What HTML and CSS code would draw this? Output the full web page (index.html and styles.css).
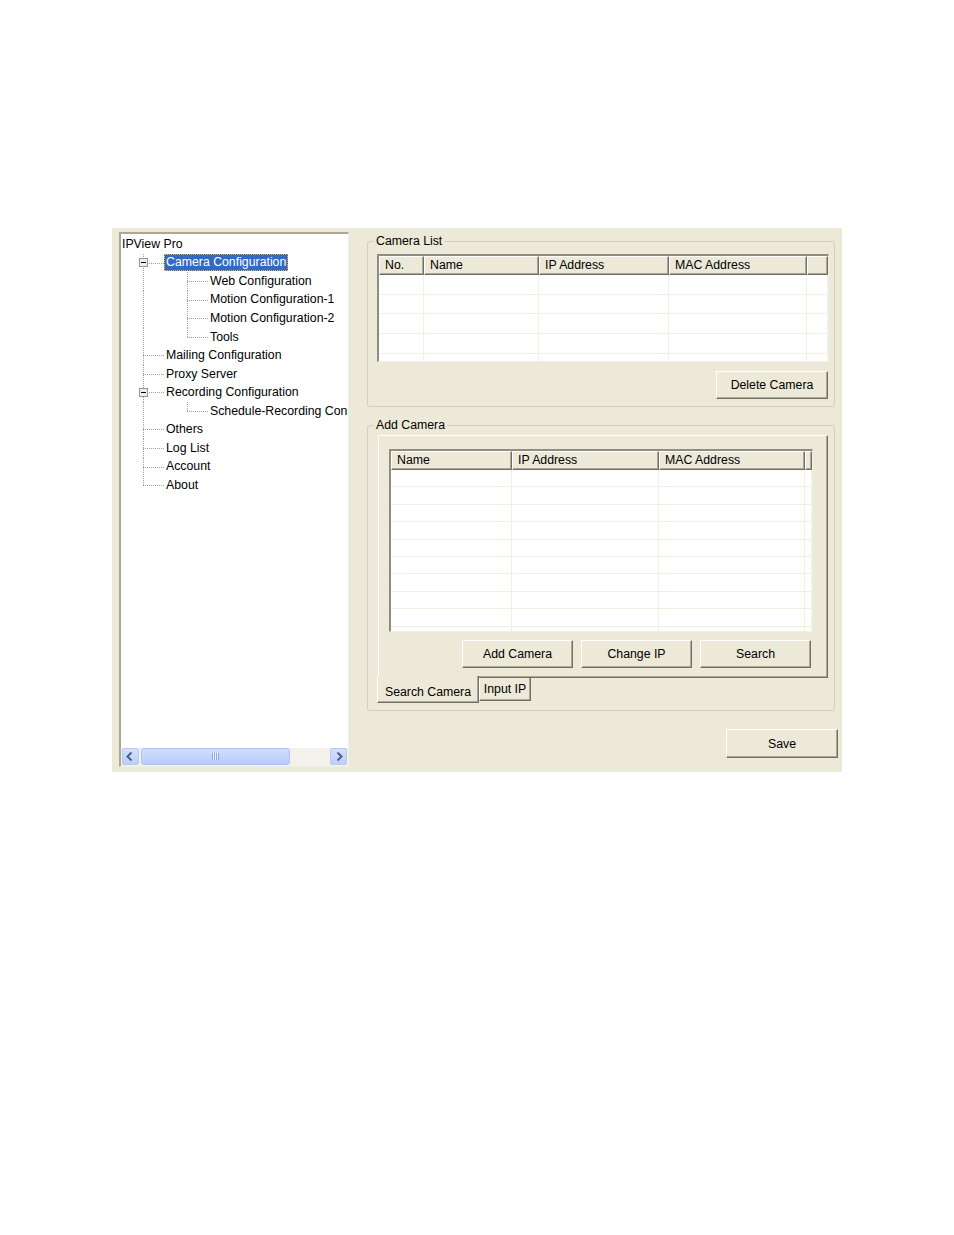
FILE: index.html
```html
<!DOCTYPE html>
<html>
<head>
<meta charset="utf-8">
<title>IPView Pro</title>
<link rel="stylesheet" href="styles.css">
</head>
<body>
<div class="page">
  <div class="window">
    <div class="treepanel">
      <div class="tree">
        <div class="row"><span class="label root">IPView Pro</span></div>
        <div class="row"><span class="sp"></span><span class="c tee"><svg class="exp" width="9" height="9" viewBox="0 0 9 9"><rect x="0.5" y="0.5" width="8" height="8" fill="#EEEDE6" stroke="#919B9C"/><path d="M2 4.5h5" stroke="#000"/></svg></span><span class="label sel">Camera Configuration</span></div>
        <div class="row"><span class="sp"></span><span class="c pipe"></span><span class="sp2"></span><span class="c tee"></span><span class="label">Web Configuration</span></div>
        <div class="row"><span class="sp"></span><span class="c pipe"></span><span class="sp2"></span><span class="c tee"></span><span class="label">Motion Configuration-1</span></div>
        <div class="row"><span class="sp"></span><span class="c pipe"></span><span class="sp2"></span><span class="c tee"></span><span class="label">Motion Configuration-2</span></div>
        <div class="row"><span class="sp"></span><span class="c pipe"></span><span class="sp2"></span><span class="c ell"></span><span class="label">Tools</span></div>
        <div class="row"><span class="sp"></span><span class="c tee"></span><span class="label">Mailing Configuration</span></div>
        <div class="row"><span class="sp"></span><span class="c tee"></span><span class="label">Proxy Server</span></div>
        <div class="row"><span class="sp"></span><span class="c tee"><svg class="exp" width="9" height="9" viewBox="0 0 9 9"><rect x="0.5" y="0.5" width="8" height="8" fill="#EEEDE6" stroke="#919B9C"/><path d="M2 4.5h5" stroke="#000"/></svg></span><span class="label">Recording Configuration</span></div>
        <div class="row"><span class="sp"></span><span class="c pipe"></span><span class="sp2"></span><span class="c ell"></span><span class="label">Schedule-Recording Con</span></div>
        <div class="row"><span class="sp"></span><span class="c tee"></span><span class="label">Others</span></div>
        <div class="row"><span class="sp"></span><span class="c tee"></span><span class="label">Log List</span></div>
        <div class="row"><span class="sp"></span><span class="c tee"></span><span class="label">Account</span></div>
        <div class="row"><span class="sp"></span><span class="c ell"></span><span class="label">About</span></div>
      </div>
      <div class="hscroll">
        <span class="sbtn"><svg width="15" height="15" viewBox="0 0 15 15"><polyline points="8.5,3.5 4.5,7.5 8.5,11.5" fill="none" stroke="#4D6185" stroke-width="2"/></svg></span>
        <span class="thumb"><span class="grip"></span></span>
        <span class="track"></span>
        <span class="sbtn"><svg width="15" height="15" viewBox="0 0 15 15"><polyline points="6.5,3.5 10.5,7.5 6.5,11.5" fill="none" stroke="#4D6185" stroke-width="2"/></svg></span>
      </div>
    </div>

    <div class="right">
      <fieldset class="group g-list">
        <legend class="leg-list">Camera List</legend>
        <div class="lv lv-cam">
          <div class="lv-head">
            <div>No.</div><div>Name</div><div>IP Address</div><div>MAC Address</div><div></div>
          </div>
          <div class="lv-body">
            <div></div><div></div><div></div><div></div><div></div>
            <div></div><div></div><div></div><div></div><div></div>
            <div></div><div></div><div></div><div></div><div></div>
            <div></div><div></div><div></div><div></div><div></div>
            <div></div><div></div><div></div><div></div><div></div>
          </div>
        </div>
        <div class="btnrow-list">
          <button class="btn w112">Delete Camera</button>
        </div>
      </fieldset>

      <fieldset class="group g-add">
        <legend class="leg-add">Add Camera</legend>
        <div class="tabpanel">
          <div class="lv lv-add">
            <div class="lv-head">
              <div>Name</div><div>IP Address</div><div>MAC Address</div><div></div>
            </div>
            <div class="lv-body">
              <div></div><div></div><div></div><div></div>
              <div></div><div></div><div></div><div></div>
              <div></div><div></div><div></div><div></div>
              <div></div><div></div><div></div><div></div>
              <div></div><div></div><div></div><div></div>
              <div></div><div></div><div></div><div></div>
              <div></div><div></div><div></div><div></div>
              <div></div><div></div><div></div><div></div>
              <div></div><div></div><div></div><div></div>
              <div></div><div></div><div></div><div></div>
            </div>
          </div>
          <div class="btnrow">
            <button class="btn w111">Add Camera</button>
            <button class="btn w111">Change IP</button>
            <button class="btn w111">Search</button>
          </div>
        </div>
        <div class="tabs">
          <div class="tab active">Search Camera</div>
          <div class="tab plain">Input IP</div>
        </div>
      </fieldset>

      <button class="btn save">Save</button>
    </div>
  </div>
</div>
</body>
</html>
```

FILE: styles.css
```css
* { box-sizing: border-box; }
html, body { margin: 0; padding: 0; background: #fff; }
body {
  font-family: "Liberation Sans", Arial, sans-serif;
  font-size: 12.3px;
  color: #000;
}
.page { padding: 228px 0 0 112px; }
.window {
  width: 730px;
  height: 544px;
  background: #ECE9D8;
  display: flex;
  gap: 18px;
  padding: 4px 4px 5px 7px;
}

/* tree */
.treepanel {
  width: 230px;
  height: 535px;
  flex: none;
  background: #fff;
  display: flex;
  flex-direction: column;
  border-style: solid;
  border-width: 2px 1px 1px 2px;
  border-color: #ACA899 #F1EFE2 #F1EFE2 #ACA899;
}
.tree {
  flex: 1;
  overflow: hidden;
  white-space: nowrap;
  padding-top: 1px;
}
.row {
  height: 18.55px;
  display: flex;
  align-items: center;
}
.sp { width: 22px; flex: none; }
.sp2 { width: 23px; flex: none; }
.c {
  width: 21px;
  flex: none;
  align-self: stretch;
  display: flex;
  align-items: center;
  background-repeat: no-repeat;
}
.tee {
  background-image:
    repeating-linear-gradient(to bottom, #A0A0A0 0 1px, transparent 1px 2px),
    repeating-linear-gradient(to right, #A0A0A0 0 1px, transparent 1px 2px);
  background-size: 1px 100%, 100% 1px;
  background-position: 0 0, 0 9px;
}
.ell {
  background-image:
    repeating-linear-gradient(to bottom, #A0A0A0 0 1px, transparent 1px 2px),
    repeating-linear-gradient(to right, #A0A0A0 0 1px, transparent 1px 2px);
  background-size: 1px 9px, 100% 1px;
  background-position: 0 0, 0 9px;
}
.pipe {
  background-image: repeating-linear-gradient(to bottom, #A0A0A0 0 1px, transparent 1px 2px);
  background-size: 1px 100%;
  background-position: 0 0;
}
.exp { display: block; margin-left: -4px; flex: none; }
.label {
  display: inline-block;
  line-height: 15px;
  padding: 0 1px;
  border: 1px solid transparent;
}
.label.root { margin-left: -1px; }
.label.sel {
  background: #316AC5;
  color: #fff;
  border: 1px dotted #D9B56E;
}

/* scrollbar */
.hscroll {
  height: 18px;
  flex: none;
  display: flex;
  padding: 0 1px 1px 1px;
  background: #F3F1EC;
}
.sbtn {
  width: 17px;
  height: 17px;
  flex: none;
  border: 1px solid #B8C9F2;
  border-radius: 2px;
  background: linear-gradient(#D3E0FD, #BCCEF9);
  display: flex;
  align-items: center;
  justify-content: center;
}
.thumb {
  width: 149px;
  height: 17px;
  flex: none;
  margin-left: 2px;
  border: 1px solid #ADC2F2;
  border-radius: 3px;
  background: linear-gradient(#D0DEFD, #B9CCF9);
  display: flex;
  align-items: center;
  justify-content: center;
}
.grip {
  width: 7px;
  height: 7px;
  background: repeating-linear-gradient(to right, #8CA5E6 0 1px, #EEF3FE 1px 2px);
}
.track { flex: 1; }

/* right column */
.right {
  width: 471px;
  flex: none;
  display: flex;
  flex-direction: column;
  padding-top: 2px;
}
.group {
  margin: 0 3px 0 0;
  border: 1px solid #D0D0BF;
  border-radius: 3px;
  min-width: 0;
}
.group legend {
  padding: 0 2px;
  font-size: 12.3px;
  line-height: 14px;
}
.g-list { padding: 6px 5px 7px 9px; }
.leg-list { margin-left: -3px; }
.g-add { padding: 3px 6px 7px 10px; margin-top: 11px; }
.leg-add { margin-left: -4px; }

/* list views */
.lv {
  background: #fff;
  border-style: solid;
  border-width: 2px 1px 1px 2px;
  border-color: #8F8D81 #F1EFE2 #F1EFE2 #8F8D81;
  overflow: hidden;
}
.lv-head { display: grid; height: 19px; }
.lv-head > div {
  background: #ECE9D8;
  border-top: 1px solid #fff;
  border-left: 1px solid #fff;
  border-right: 1px solid #716F64;
  border-bottom: 1px solid #716F64;
  box-shadow: inset -1px -1px 0 #ACA899;
  padding-left: 5px;
  line-height: 16px;
  white-space: nowrap;
  overflow: hidden;
}
.lv-body { display: grid; overflow: hidden; }
.lv-body > div {
  border-right: 1px solid #F1EFE2;
  border-bottom: 1px solid #F1EFE2;
}
.lv-cam .lv-head,
.lv-cam .lv-body { grid-template-columns: 45px 115px 130px 138px 1fr; }
.lv-cam .lv-body { height: 86px; grid-auto-rows: 19.67px; }
.lv-add .lv-head,
.lv-add .lv-body { grid-template-columns: 121px 147px 146px 1fr; }
.lv-add .lv-body { height: 161px; grid-auto-rows: 17.4px; }

/* buttons */
.btn {
  font-family: inherit;
  font-size: 12.3px;
  color: #000;
  background: #ECE9D8;
  border: 1px solid;
  border-color: #fff #716F64 #716F64 #fff;
  box-shadow: inset -1px -1px 0 #ACA899;
  height: 28px;
  padding: 0;
  margin: 0;
}
.w112 { width: 112px; }
.w111 { width: 111px; }
.btnrow-list {
  display: flex;
  justify-content: flex-end;
  margin-top: 9px;
  padding-right: 1px;
}
.btnrow {
  display: flex;
  justify-content: flex-end;
  gap: 8px;
  margin-top: 8px;
  padding-right: 2px;
}
.save {
  align-self: flex-end;
  width: 112px;
  height: 29px;
  margin-top: 18px;
}

/* tabs */
.tabpanel {
  border: 1px solid;
  border-color: #fff #716F64 #716F64 #fff;
  box-shadow: inset -1px -1px 0 #ACA899;
  padding: 13px 14px 9px 10px;
}
.tabs {
  display: flex;
  align-items: flex-start;
  margin-top: -2px;
  margin-left: -1px;
}
.tab {
  background: #ECE9D8;
  text-align: center;
  line-height: 14px;
  white-space: nowrap;
  border-left: 1px solid #fff;
  border-right: 1px solid #716F64;
  border-bottom: 1px solid #716F64;
  box-shadow: inset -1px -1px 0 #ACA899;
}
.tab.active {
  width: 102px;
  height: 27px;
  padding-top: 9px;
}
.tab.plain {
  width: 52px;
  height: 23px;
  margin-top: 2px;
  padding-top: 4px;
}
```
